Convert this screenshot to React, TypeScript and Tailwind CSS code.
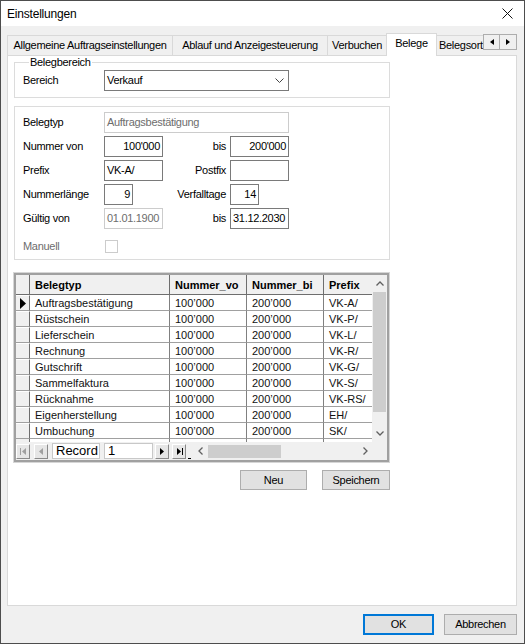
import React from "react";

const rows: [string, string][] = [
  ["Auftragsbestätigung", "VK-A/"],
  ["Rüstschein", "VK-P/"],
  ["Lieferschein", "VK-L/"],
  ["Rechnung", "VK-R/"],
  ["Gutschrift", "VK-G/"],
  ["Sammelfaktura", "VK-S/"],
  ["Rücknahme", "VK-RS/"],
  ["Eigenherstellung", "EH/"],
  ["Umbuchung", "SK/"],
];

function Box({
  w,
  value,
  right,
  disabled,
}: {
  w: string;
  value?: string;
  right?: boolean;
  disabled?: boolean;
}) {
  return (
    <div
      className={
        (disabled ? "border-[#cccccc] text-[#6d6d6d] " : "border-[#7a7a7a] text-black ") +
        (right ? "justify-end pr-[2px] " : "justify-start pl-[2px] ") +
        w +
        " h-[21px] border bg-white flex items-center whitespace-nowrap overflow-hidden"
      }
    >
      {value}
    </div>
  );
}

function NavBtn({ children, w }: { children: React.ReactNode; w: string }) {
  return (
    <div
      className={
        w +
        " h-[15px] bg-[#e6e6e6] border border-t-white border-l-white border-r-[#8a8a8a] border-b-[#8a8a8a] flex items-center justify-center"
      }
    >
      {children}
    </div>
  );
}

export default function App() {
  return (
    <div className="w-[525px] h-[644px] border border-[#4d4d4d] bg-[#f0f0f0] flex flex-col overflow-hidden font-['Liberation_Sans',Arial,sans-serif] text-black">
      {/* Title bar */}
      <div className="h-[25px] bg-white flex items-center justify-between pl-[6px] pr-[11px] shrink-0">
        <span className="text-[12px] tracking-[-0.2px]">Einstellungen</span>
        <svg width="11" height="11" viewBox="0 0 11 11">
          <path d="M0.5 0.5 L10.5 10.5 M10.5 0.5 L0.5 10.5" stroke="#111" strokeWidth="1" />
        </svg>
      </div>

      {/* Tabs */}
      <div className="mt-[7px] ml-[6px] h-[22px] flex items-end text-[11px] tracking-[-0.3px] shrink-0">
        <div className="w-[165px] h-[20px] border border-r-0 border-b-0 border-[#d9d9d9] bg-[#f0f0f0] flex items-center justify-center">
          Allgemeine Auftragseinstellungen
        </div>
        <div className="w-[155px] h-[20px] border border-r-0 border-b-0 border-[#d9d9d9] bg-[#f0f0f0] flex items-center justify-center">
          Ablauf und Anzeigesteuerung
        </div>
        <div className="w-[59px] h-[20px] border border-r-0 border-b-0 border-[#d9d9d9] bg-[#f0f0f0] flex items-center justify-center">
          Verbuchen
        </div>
        <div className="relative z-10 w-[51px] h-[23px] -mb-[1px] border border-b-0 border-[#d9d9d9] bg-white flex items-center justify-center pb-[3px]">
          Belege
        </div>
        <div className="w-[46px] h-[20px] border border-l-0 border-r-0 border-b-0 border-[#d9d9d9] bg-[#f0f0f0] flex items-center pl-[2px] overflow-hidden whitespace-nowrap">
          Belegsort
        </div>
        <div className="self-start mt-[1px] flex">
          <div className="w-[17px] h-[16px] border border-[#adadad] bg-[#f0f0f0] flex items-center justify-center">
            <svg width="4" height="6" viewBox="0 0 4 6">
              <path d="M4 0 L0 3 L4 6 Z" fill="#000" />
            </svg>
          </div>
          <div className="w-[17px] h-[16px] border border-l-0 border-[#adadad] bg-[#f0f0f0] flex items-center justify-center">
            <svg width="4" height="6" viewBox="0 0 4 6">
              <path d="M0 0 L4 3 L0 6 Z" fill="#000" />
            </svg>
          </div>
        </div>
      </div>

      {/* Tab panel */}
      <div className="ml-[6px] w-[510px] h-[551px] border border-[#d9d9d9] bg-white flex flex-col pl-[6px] text-[11px] tracking-[-0.3px] shrink-0">
        {/* Belegbereich */}
        <fieldset className="w-[376px] border border-[#dcdcdc] pl-[8px] pb-[6px]">
          <legend className="ml-[6px] px-[1px] leading-[13px]">Belegbereich</legend>
          <div className="flex items-center mt-[1px] h-[21px]">
            <div className="w-[81px]">Bereich</div>
            <div className="w-[185px] h-[21px] border border-[#7a7a7a] bg-white flex items-center justify-between pl-[2px] pr-[4px]">
              <span>Verkauf</span>
              <svg width="9" height="5" viewBox="0 0 9 5">
                <path d="M0.5 0.5 L4.5 4.5 L8.5 0.5" fill="none" stroke="#444" strokeWidth="1" />
              </svg>
            </div>
          </div>
        </fieldset>

        {/* Belegtyp details */}
        <div className="mt-[8px] w-[376px] border border-[#dcdcdc] pl-[8px] pt-[5px] pb-[2px] flex flex-col gap-[3px]">
          <div className="flex items-center h-[21px]">
            <div className="w-[81px]">Belegtyp</div>
            <Box w="w-[185px]" value="Auftragsbestätigung" disabled />
          </div>
          <div className="flex items-center h-[21px]">
            <div className="w-[81px]">Nummer von</div>
            <Box w="w-[59px]" value="100'000" right />
            <div className="w-[67px] text-right pr-[4px]">bis</div>
            <Box w="w-[59px]" value="200'000" right />
          </div>
          <div className="flex items-center h-[21px]">
            <div className="w-[81px]">Prefix</div>
            <Box w="w-[59px]" value="VK-A/" />
            <div className="w-[67px] text-right pr-[4px]">Postfix</div>
            <Box w="w-[59px]" />
          </div>
          <div className="flex items-center h-[21px]">
            <div className="w-[81px]">Nummerlänge</div>
            <Box w="w-[29px]" value="9" right />
            <div className="w-[97px] text-right pr-[4px]">Verfalltage</div>
            <Box w="w-[29px]" value="14" right />
          </div>
          <div className="flex items-center h-[21px]">
            <div className="w-[81px]">Gültig von</div>
            <Box w="w-[59px]" value="01.01.1900" disabled />
            <div className="w-[67px] text-right pr-[4px]">bis</div>
            <Box w="w-[59px]" value="31.12.2030" />
          </div>
          <div className="flex items-center h-[21px] mt-[4px]">
            <div className="w-[81px] text-[#6d6d6d]">Manuell</div>
            <div className="ml-[1px] w-[13px] h-[13px] border border-[#cccccc] bg-white" />
          </div>
        </div>

        {/* Data grid */}
        <div className="-ml-[1px] mt-[12px] w-[377px] h-[191px] border border-[#d6d6d6] bg-[#a0a0a0] p-[2px] flex flex-col font-['Liberation_Sans',Arial,sans-serif] tracking-normal">
          <div className="flex-1 bg-[#f0f0f0] flex flex-col overflow-hidden">
            <div className="flex h-[167px] overflow-hidden">
              <div className="w-[356px] flex flex-col bg-white">
                {/* header */}
                <div className="flex h-[20px] shrink-0 bg-[#f0f0f0] font-bold text-[11px]">
                  <div className="w-[14px] border-r border-b border-[#6e6e6e]" />
                  <div className="w-[140px] border-r border-b border-[#6e6e6e] pl-[5px] pt-[1px] flex items-center">Belegtyp</div>
                  <div className="w-[77px] border-r border-b border-[#6e6e6e] pl-[5px] pt-[1px] flex items-center overflow-hidden whitespace-nowrap">Nummer_vo</div>
                  <div className="w-[77px] border-r border-b border-[#6e6e6e] pl-[5px] pt-[1px] flex items-center overflow-hidden whitespace-nowrap">Nummer_bi</div>
                  <div className="w-[48px] border-b border-[#6e6e6e] pl-[5px] pt-[1px] flex items-center">Prefix</div>
                </div>
                {rows.map(([name, prefix], i) => (
                  <div key={name} className="flex h-[16px] shrink-0 text-[11px] text-[#111]">
                    <div className="w-[14px] bg-[#f0f0f0] border-r border-r-[#6e6e6e] border-b border-b-[#a0a0a0] border-t border-t-white flex items-center justify-center">
                      {i === 0 ? (
                        <svg width="6" height="11" viewBox="0 0 6 11">
                          <path d="M0 0 L6 5.5 L0 11 Z" fill="#000" />
                        </svg>
                      ) : null}
                    </div>
                    <div className="w-[140px] border-r border-r-[#808080] border-b border-b-[#a0a0a0] pl-[5px] pt-[1px] flex items-center">{name}</div>
                    <div className="w-[77px] border-r border-r-[#808080] border-b border-b-[#a0a0a0] pl-[5px] pt-[1px] flex items-center">100’000</div>
                    <div className="w-[77px] border-r border-r-[#808080] border-b border-b-[#a0a0a0] pl-[5px] pt-[1px] flex items-center">200’000</div>
                    <div className="w-[48px] border-b border-b-[#a0a0a0] pl-[5px] pt-[1px] flex items-center">{prefix}</div>
                  </div>
                ))}
                <div className="flex h-[3px] shrink-0">
                  <div className="w-[14px] bg-[#f0f0f0] border-r border-[#6e6e6e]" />
                  <div className="w-[140px] border-r border-[#808080]" />
                  <div className="w-[77px] border-r border-[#808080]" />
                  <div className="w-[77px] border-r border-[#808080]" />
                  <div className="w-[48px]" />
                </div>
              </div>
              {/* vertical scrollbar */}
              <div className="w-[15px] bg-[#f0f0f0] flex flex-col">
                <div className="h-[17px] flex items-center justify-center">
                  <svg width="8" height="5" viewBox="0 0 8 5">
                    <path d="M0.5 4.5 L4 1 L7.5 4.5" fill="none" stroke="#606060" strokeWidth="1.3" />
                  </svg>
                </div>
                <div className="h-[120px] mx-[1px] bg-[#cdcdcd]" />
                <div className="flex-1" />
                <div className="h-[17px] flex items-center justify-center">
                  <svg width="8" height="5" viewBox="0 0 8 5">
                    <path d="M0.5 0.5 L4 4 L7.5 0.5" fill="none" stroke="#606060" strokeWidth="1.3" />
                  </svg>
                </div>
              </div>
            </div>
            {/* navigation bar */}
            <div className="flex-1 flex items-center bg-[#f0f0f0]">
              <NavBtn w="w-[14px]">
                <svg width="7" height="7" viewBox="0 0 7 7">
                  <path d="M0.5 0 V7" stroke="#a0a0a0" strokeWidth="1" />
                  <path d="M6 0 L2 3.5 L6 7 Z" fill="#a0a0a0" />
                </svg>
              </NavBtn>
              <div className="ml-[4px]">
                <NavBtn w="w-[14px]">
                  <svg width="4" height="7" viewBox="0 0 4 7">
                    <path d="M4 0 L0 3.5 L4 7 Z" fill="#a0a0a0" />
                  </svg>
                </NavBtn>
              </div>
              <div className="ml-[4px] w-[48px] h-[16px] bg-white border border-[#c8c8c8] text-[13px] leading-[14px] pl-[3px] flex items-center">
                Record
              </div>
              <div className="ml-[4px] w-[49px] h-[16px] bg-white border border-[#c8c8c8] text-[13px] leading-[14px] pl-[3px] flex items-center">
                1
              </div>
              <div className="ml-[2px]">
                <NavBtn w="w-[14px]">
                  <svg width="4" height="7" viewBox="0 0 4 7">
                    <path d="M0 0 L4 3.5 L0 7 Z" fill="#000" />
                  </svg>
                </NavBtn>
              </div>
              <div className="ml-[3px]">
                <NavBtn w="w-[14px]">
                  <svg width="7" height="7" viewBox="0 0 7 7">
                    <path d="M1 0 L5 3.5 L1 7 Z" fill="#000" />
                    <path d="M6.5 0 V7" stroke="#000" strokeWidth="1" />
                  </svg>
                </NavBtn>
              </div>
              <div className="w-[6px] h-[16px] flex items-end pl-[2px]">
                <div className="w-[3px] h-[1px] bg-black" />
              </div>
              {/* horizontal scrollbar */}
              <div className="w-[181px] h-[16px] flex items-center bg-[#f0f0f0]">
                <div className="w-[16px] flex items-center justify-center">
                  <svg width="5" height="8" viewBox="0 0 5 8">
                    <path d="M4.5 0.5 L1 4 L4.5 7.5" fill="none" stroke="#606060" strokeWidth="1.3" />
                  </svg>
                </div>
                <div className="w-[73px] h-[13px] bg-[#cdcdcd]" />
                <div className="flex-1" />
                <div className="w-[16px] flex items-center justify-center">
                  <svg width="5" height="8" viewBox="0 0 5 8">
                    <path d="M0.5 0.5 L4 4 L0.5 7.5" fill="none" stroke="#606060" strokeWidth="1.3" />
                  </svg>
                </div>
              </div>
            </div>
          </div>
        </div>

        {/* Neu / Speichern */}
        <div className="mt-[7px] w-[376px] flex justify-end gap-[15px]">
          <div className="w-[67px] h-[20px] bg-[#e1e1e1] border border-[#adadad] flex items-center justify-center">Neu</div>
          <div className="w-[68px] h-[20px] bg-[#e1e1e1] border border-[#adadad] flex items-center justify-center">Speichern</div>
        </div>
      </div>

      {/* Footer */}
      <div className="mt-[8px] pr-[7px] flex justify-end gap-[10px] text-[11px] tracking-[-0.3px]">
        <div className="w-[71px] h-[21px] bg-[#e1e1e1] border-2 border-[#0078d7] flex items-center justify-center">OK</div>
        <div className="w-[73px] h-[21px] bg-[#e1e1e1] border border-[#adadad] flex items-center justify-center">Abbrechen</div>
      </div>
    </div>
  );
}
